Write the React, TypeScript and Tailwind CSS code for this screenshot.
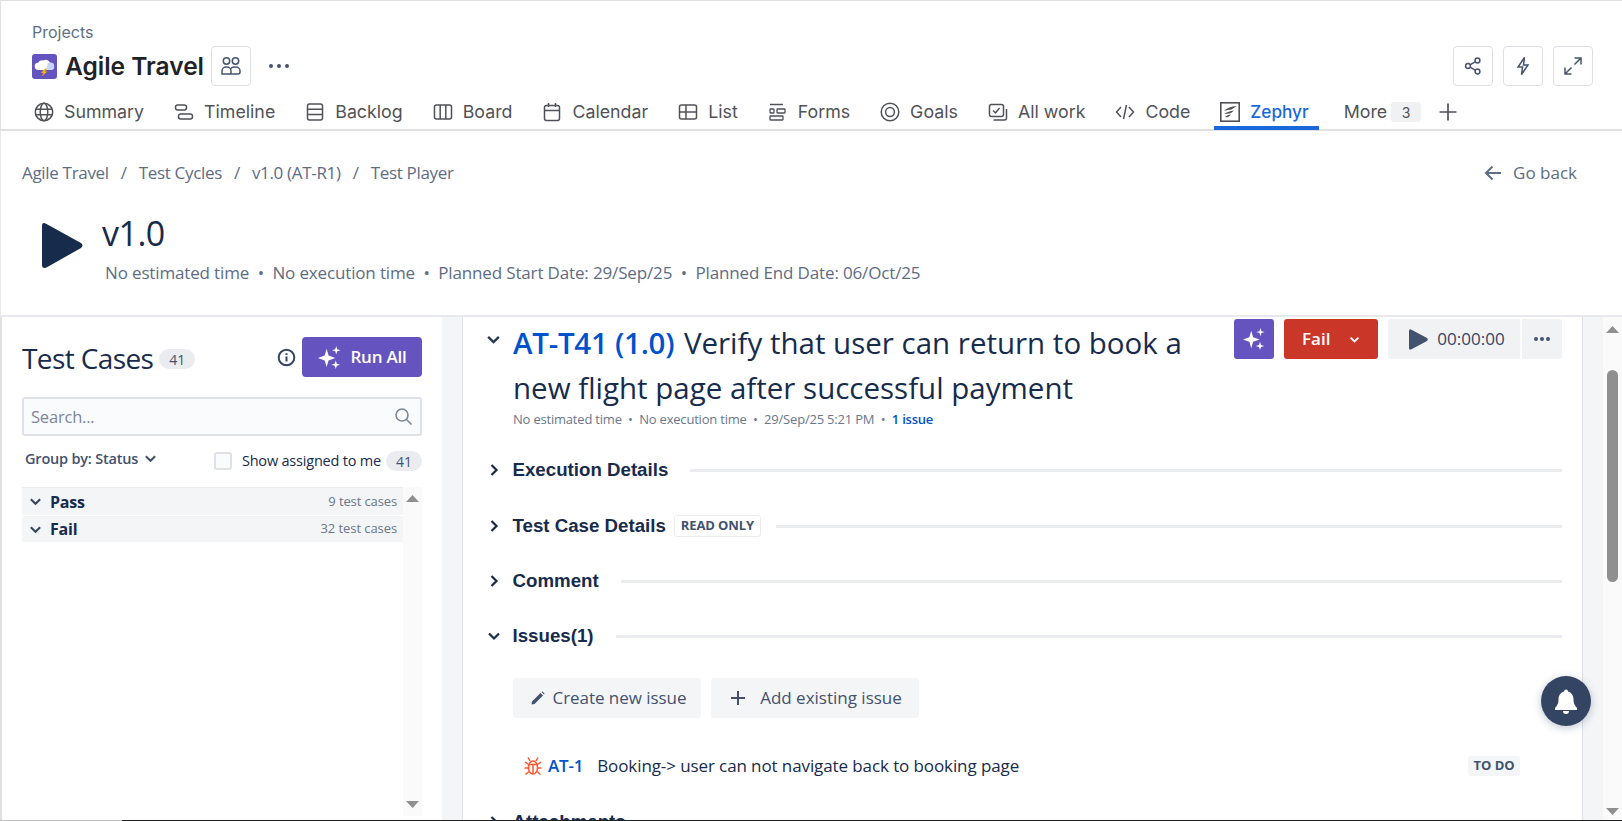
import React from "react";

const S = ({ children, w = 20, vb = "0 0 20 20", c = "" }: { children: React.ReactNode; w?: number; vb?: string; c?: string }) => (
  <svg width={w} height={w} viewBox={vb} fill="none" stroke="currentColor" strokeWidth="1.5" className={`shrink-0 ${c}`}>
    {children}
  </svg>
);

const Sparkles = ({ w = 26 }: { w?: number }) => (
  <svg width={w} height={w} viewBox="0 0 26 26" fill="white" className="shrink-0">
    <path d="M10 4 L12 11 L19 13.5 L12 16 L10 23 L8 16 L1 13.5 L8 11 Z" />
    <path d="M20 1 L21 4.5 L24.5 5.5 L21 6.5 L20 10 L19 6.5 L15.5 5.5 L19 4.5 Z" />
    <path d="M19.5 16 L20.6 19.4 L24 20.5 L20.6 21.6 L19.5 25 L18.4 21.6 L15 20.5 L18.4 19.4 Z" />
  </svg>
);

const Chevron = ({ dir = "down", c = "text-[#172b4d]", w = 14 }: { dir?: "down" | "right"; c?: string; w?: number }) => (
  <svg width={w} height={w} viewBox="0 0 14 14" fill="none" stroke="currentColor" strokeWidth="2.2" className={`shrink-0 ${c}`}>
    {dir === "down" ? <path d="M2 4.5 L7 9.5 L12 4.5" /> : <path d="M4.5 2 L9.5 7 L4.5 12" />}
  </svg>
);

const nav: { label: string; icon: React.ReactNode }[] = [
  { label: "Summary", icon: <S><circle cx="10" cy="10" r="8.7" /><ellipse cx="10" cy="10" rx="3.8" ry="8.7" /><path d="M1.5 7.3h17M1.5 12.7h17" /></S> },
  { label: "Timeline", icon: <S><rect x="1.5" y="3" width="11" height="5" rx="2.2" /><rect x="4.5" y="12" width="14" height="5" rx="2.2" /></S> },
  { label: "Backlog", icon: <S><rect x="2.5" y="2" width="15" height="16" rx="2" /><path d="M2.5 7.3h15M2.5 12.6h15" /></S> },
  { label: "Board", icon: <S><rect x="1.5" y="3" width="17" height="14" rx="2" /><path d="M7.2 3v14M12.8 3v14" /></S> },
  { label: "Calendar", icon: <S><rect x="2.5" y="3.5" width="15" height="15" rx="2" /><path d="M2.5 8.5h15M6.5 1v4M13.5 1v4" /></S> },
  { label: "List", icon: <S><rect x="1.5" y="3" width="17" height="14" rx="2" /><path d="M1.5 10h17M8 3v14" /></S> },
  { label: "Forms", icon: <S><path d="M2 2.5h13" /><rect x="2" y="7" width="4" height="4" rx="0.5" strokeWidth="1.3" /><rect x="9" y="7" width="8" height="4" rx="0.5" strokeWidth="1.3" /><rect x="2" y="14" width="13" height="4" rx="0.5" strokeWidth="1.3" /></S> },
  { label: "Goals", icon: <S><circle cx="10" cy="10" r="8.8" /><circle cx="10" cy="10" r="4.4" /></S> },
  { label: "All work", icon: <S><rect x="1.5" y="2.5" width="14" height="12" rx="2" /><path d="M5 8.5 L7.5 11 L11.5 6" /><path d="M18.5 7v9a2 2 0 0 1-2 2h-11" /></S> },
  { label: "Code", icon: <S><path d="M6 5 L1.5 10 L6 15M14 5 L18.5 10 L14 15M11.5 3 L8.5 17" /></S> },
];

const Section = ({ title, open = false, badge, mt }: { title: string; open?: boolean; badge?: boolean; mt: string }) => (
  <div className={`flex items-center h-[24px] ${mt}`}>
    <div className="w-[26.5px] pl-[1px] shrink-0"><Chevron dir={open ? "down" : "right"} w={14} /></div>
    <span className="font-['Liberation_Sans'] font-bold text-[18.7px] text-[#172b4d] whitespace-nowrap">{title}</span>
    {badge && (
      <span className="ml-[8px] h-[22px] w-[87px] flex items-center justify-center rounded-[3px] border border-[#ebecf0] text-[13px] font-bold text-[#42526e] font-['Open_Sans'] tracking-[-0.1px]">READ ONLY</span>
    )}
    <div className={`flex-1 h-[3px] bg-[#ebecf0] ${badge ? "ml-[15px]" : "ml-[22px]"}`} />
  </div>
);

export default function App() {
  return (
    <div className="relative w-[1622px] h-[821px] overflow-hidden bg-white font-['Open_Sans'] text-[#172b4d]">
      <div className="h-[131px] border-t border-l border-b-2 border-[#e0e0e0] font-['Inter'] flex flex-col">
        <div className="pl-[31px] pt-[21px] h-[45px] text-[16px] leading-[20px] text-[#626f86]">Projects</div>
        <div className="flex items-center h-[40px] pl-[31px] pr-[29px]">
          <svg width="25" height="25" viewBox="0 0 25 25" className="shrink-0">
            <rect width="25" height="25" rx="3" fill="#6554c0" />
            <path d="M6.5 16a3.6 3.6 0 0 1-.4-7.2 4.2 4.2 0 0 1 5-2.4 4.8 4.8 0 0 1 7 2.600 3.500 3.500 0 0 1 .8 7Z" fill="#ffffff" />
            <path d="M16 9a3.800 3.800 0 0 1 2.100-.4 3.500 3.500 0 0 1 .8 7.400H14Z" fill="#c9d4fb" />
            <path d="M13 14.500 L9 19 H11.500 L9.500 22.500 L15.500 17.500 H13 L15 14.500Z" fill="#f5b301" />
          </svg>
          <span className="ml-[8px] text-[24.5px] font-semibold text-[#1f2328] whitespace-nowrap">Agile Travel</span>
          <div className="ml-[7px] w-[40px] h-[40px] border border-[#dcdfe4] rounded-[4px] flex items-center justify-center text-[#44546f]">
            <S w={22} vb="0 0 22 22"><circle cx="6.5" cy="6" r="3.2" /><circle cx="15.5" cy="6" r="3.2" /><path d="M2 19v-3a4 4 0 0 1 4-4h1a4 4 0 0 1 4 4v3ZM11 19h7a2 2 0 0 0 2-2v-1a4 4 0 0 0-4-4h-2a4 4 0 0 0-3 1.5" /></S>
          </div>
          <div className="ml-[18px] flex gap-[4px]">
            <i className="w-[4px] h-[4px] rounded-full bg-[#44546f]" /><i className="w-[4px] h-[4px] rounded-full bg-[#44546f]" /><i className="w-[4px] h-[4px] rounded-full bg-[#44546f]" />
          </div>
          <div className="ml-auto flex gap-[10px] text-[#44546f]">
            <div className="w-[40px] h-[40px] border border-[#dcdfe4] rounded-[4px] flex items-center justify-center">
              <S w={18} vb="0 0 18 18"><circle cx="4" cy="9" r="2.4" /><circle cx="13.5" cy="3.5" r="2.4" /><circle cx="13.5" cy="14.5" r="2.4" /><path d="M6 7.8 L11.5 4.7M6 10.2 L11.5 13.3" /></S>
            </div>
            <div className="w-[40px] h-[40px] border border-[#dcdfe4] rounded-[4px] flex items-center justify-center">
              <S w={20} vb="0 0 20 20"><path d="M11.5 1.5 L5 11 H9.5 L8.5 18.5 L15 9 H10.5Z" /></S>
            </div>
            <div className="w-[40px] h-[40px] border border-[#dcdfe4] rounded-[4px] flex items-center justify-center">
              <S w={20} vb="0 0 20 20"><path d="M11.5 2h6.5v6.5M18 2 L11.5 8.5M8.5 18H2v-6.5M2 18 L8.5 11.5" /></S>
            </div>
          </div>
        </div>
        <div className="flex items-center h-[42px] pt-[10px] pl-[33px] gap-[30px] text-[#505258] text-[17.8px] whitespace-nowrap">
          {nav.map((n) => (
            <div key={n.label} className="flex items-center gap-[10px]">
              {n.icon}
              <span>{n.label}</span>
            </div>
          ))}
          <div className="relative flex items-center gap-[10px] h-[32px] text-[#1868db] text-[17.2px] font-medium -ml-[6px] -mr-[10px] pl-[6px] pr-[10px]">
            <span className="text-[#505258]">
              <svg width="20" height="20" viewBox="0 0 20 20" fill="none" className="shrink-0">
                <rect x="0.8" y="0.8" width="18.4" height="18.400" stroke="currentColor" strokeWidth="1.6" />
                <path d="M4 9 C7 6 11 4.500 16.500 4 C14.500 5.500 13 6.500 11.500 7.500 C9 7.800 6.500 8.300 4 9Z" fill="currentColor" />
                <path d="M4 12 C7 10 10 9 14 8.500 C12.500 10 11 11 9.500 11.500 C7.500 11.500 5.500 11.700 4 12Z" fill="currentColor" />
                <path d="M5 15 C6.500 13.500 8.500 12.800 11 12.500 C9.800 14 8.500 15 7 15.200 C6.300 15.200 5.600 15.100 5 15Z" fill="currentColor" />
              </svg>
            </span>
            <span>Zephyr</span>
            <div className="absolute left-0 right-0 -bottom-[2px] h-[4px] bg-[#1868db]" />
          </div>
          <div className="flex items-center ml-[5px]">
            <span>More</span>
            <span className="ml-[4px] w-[30px] h-[20px] rounded-[3px] bg-[#f0f1f2] text-[14px] flex items-center justify-center">3</span>
            <svg width="18" height="18" viewBox="0 0 18 18" stroke="currentColor" strokeWidth="1.7" className="ml-[18px]"><path d="M9 0.5v17M0.5 9h17" /></svg>
          </div>
        </div>
      </div>

      <div className="h-[186px] border-l border-b-2 border-[#e8e9ec] flex flex-col">
        <div className="mt-[31px] pl-[21px] pr-[45px] flex items-center justify-between h-[22px] text-[#5e6c84] text-[17px]">
          <div className="flex gap-[12px] whitespace-nowrap tracking-[-0.32px]">
            <span>Agile Travel</span><span>/</span><span>Test Cycles</span><span>/</span><span>v1.0 (AT-R1)</span><span>/</span><span>Test Player</span>
          </div>
          <div className="flex items-center gap-[10px] whitespace-nowrap font-medium">
            <svg width="20" height="20" viewBox="0 0 20 20" fill="none" stroke="currentColor" strokeWidth="2"><path d="M18 10H3M9.5 3.5 L3 10 L9.5 16.5" /></svg>
            <span>Go back</span>
          </div>
        </div>
        <div className="flex pl-[41px] mt-[27px]">
          <svg width="41" height="47" viewBox="0 0 41 47" className="shrink-0 mt-[11px]">
            <path d="M0 4 Q0 -1 4.5 2 L39 21 Q42 23.5 39 26 L4.5 45.5 Q0 47 0 43 Z" fill="#172b4d" />
          </svg>
          <div className="ml-[19px]">
            <div className="text-[34px] leading-[44px] text-[#172b4d] tracking-[-0.5px]">v1.0</div>
            <div className="mt-[7px] ml-[3px] text-[17px] leading-[22px] text-[#5e6c84] whitespace-nowrap tracking-[-0.15px]">No estimated time&nbsp; •&nbsp; No execution time&nbsp; •&nbsp; Planned Start Date: 29/Sep/25&nbsp; •&nbsp; Planned End Date: 06/Oct/25</div>
          </div>
        </div>
      </div>

      <div className="flex h-[504px]">
        <div className="w-[442px] shrink-0 border-l-2 border-[#e0e0e0] pl-[20px] pr-[20px] pt-[20px] flex flex-col">
          <div className="flex items-center h-[40px]">
            <span className="text-[28px] tracking-[-0.6px] whitespace-nowrap pt-[2px]">Test Cases</span>
            <span className="ml-[6px] mt-[4px] w-[36px] h-[20px] rounded-full bg-[#ebecf0] text-[14px] text-[#42526e] flex items-center justify-center">41</span>
            <svg width="19" height="19" viewBox="0 0 19 19" fill="none" className="ml-auto text-[#344563]" stroke="currentColor" strokeWidth="2"><circle cx="9.5" cy="9.5" r="7.8" /><path d="M9.5 8.5v5M9.5 5.2v1.8" /></svg>
            <button className="ml-[6px] w-[120px] h-[40px] rounded-[4px] bg-[#6554c0] text-white text-[17px] font-semibold flex items-center justify-center gap-[8px] tracking-[-0.2px]">
              <Sparkles w={25} /> Run All
            </button>
          </div>
          <div className="mt-[20px] h-[39px] border-2 border-[#dfe1e6] rounded-[3px] bg-[#fafbfc] flex items-center pl-[7px] pr-[7px] justify-between">
            <span className="text-[#7a869a] text-[16.5px] tracking-[-0.2px] pt-[2px]">Search...</span>
            <svg width="19" height="19" viewBox="0 0 19 19" fill="none" stroke="#7a869a" strokeWidth="1.6"><circle cx="8" cy="8" r="6" /><path d="M12.5 12.5 L17.5 17.5" /></svg>
          </div>
          <div className="flex items-center mt-[12px] h-[26px]">
            <div className="flex items-center gap-[6px] pl-[3px] -mt-[5px] text-[14.5px] font-semibold text-[#42526e] tracking-[-0.2px] whitespace-nowrap">
              Group by: Status <Chevron c="text-[#42526e]" w={13} />
            </div>
            <div className="ml-auto flex items-center">
              <span className="w-[18px] h-[18px] rounded-[3px] border-2 border-[#dfe1e6] bg-[#fafbfc]" />
              <span className="ml-[10px] text-[14.5px] tracking-[-0.2px] whitespace-nowrap">Show assigned to me</span>
              <span className="ml-[5px] w-[36px] h-[20px] rounded-full bg-[#ebecf0] text-[14px] text-[#42526e] flex items-center justify-center">41</span>
            </div>
          </div>
          <div className="mt-[13px] flex flex-1 min-h-0">
            <div className="flex-1">
              <div className="h-[28px] border-t border-[#ebecf0] bg-[#f4f5f7] flex items-center pl-[7px] pr-[6px] mb-[1px]">
                <Chevron w={13} c="text-[#344563]" />
                <span className="ml-[8px] text-[16px] font-bold tracking-[-0.2px]">Pass</span>
                <span className="ml-auto text-[13px] text-[#6b778c] tracking-[-0.12px]">9 test cases</span>
              </div>
              <div className="h-[26px] bg-[#f4f5f7] flex items-center pl-[7px] pr-[6px]">
                <Chevron w={13} c="text-[#344563]" />
                <span className="ml-[8px] text-[16px] font-bold tracking-[-0.2px]">Fail</span>
                <span className="ml-auto text-[13px] text-[#6b778c] tracking-[-0.08px]">32 test cases</span>
              </div>
            </div>
            <div className="w-[19px] mb-[5px] bg-[#fafafa] flex flex-col items-center justify-between pt-[8px] pb-[8px]">
              <svg width="13" height="7" viewBox="0 0 13 7" fill="#8f8f8f"><path d="M6.5 0 L13 7 H0Z" /></svg>
              <svg width="13" height="7" viewBox="0 0 13 7" fill="#8f8f8f"><path d="M0 0 H13 L6.5 7Z" /></svg>
            </div>
          </div>
        </div>
        <div className="w-[21px] shrink-0 bg-[#f4f5f7] border-r border-[#dfe1e6]" />
        <div className="flex-1 min-w-0 overflow-hidden pl-[23px] pr-[20px] pt-[2px]">
          <div className="flex h-[110px] items-start">
            <div className="w-[27px] pt-[13px] shrink-0"><Chevron w={15} c="text-[#253858]" /></div>
            <div className="w-[700px] shrink-0 pt-[1px]">
              <div className="text-[29.5px] leading-[45px]">
                <span className="text-[#0052cc] font-semibold tracking-[-0.25px] mr-[2px]">AT-T41 (1.0)</span> Verify that user can return to book a new flight page after successful payment
              </div>
              <div className="text-[13px] leading-[16px] text-[#6b778c] whitespace-nowrap mt-[1px] tracking-[-0.2px]">
                No estimated time&nbsp; •&nbsp; No execution time&nbsp; •&nbsp; 29/Sep/25 5:21 PM&nbsp; •&nbsp; <span className="text-[#0052cc] font-semibold">1 issue</span>
              </div>
            </div>
            <div className="ml-auto flex">
              <div className="w-[40px] h-[40px] rounded-[3px] bg-[#6554c0] flex items-center justify-center"><Sparkles w={24} /></div>
              <div className="ml-[10px] w-[94px] h-[40px] rounded-[3px] bg-[#ca3728] text-white flex items-center pl-[18px] pr-[18px] justify-between text-[17px] font-semibold">
                Fail <Chevron c="text-white" w={11} />
              </div>
              <div className="ml-[10px] w-[132px] h-[40px] rounded-l-[3px] bg-[#f1f2f4] flex items-center justify-center gap-[9px] pl-[6px] text-[#344563]">
                <svg width="19" height="21" viewBox="0 0 19 21" fill="#42526e"><path d="M0 2 Q0 -0.5 2.5 0.8 L18 9 Q19.5 10.5 18 12 L2.5 20.2 Q0 21.5 0 19 Z" /></svg>
                <span className="text-[17px]">00:00:00</span>
              </div>
              <div className="ml-[2px] w-[40px] h-[40px] rounded-r-[3px] bg-[#f1f2f4] flex items-center justify-center gap-[2px]">
                <i className="w-[4px] h-[4px] rounded-full bg-[#42526e]" /><i className="w-[4px] h-[4px] rounded-full bg-[#42526e]" /><i className="w-[4px] h-[4px] rounded-full bg-[#42526e]" />
              </div>
            </div>
          </div>
          <Section title="Execution Details" mt="mt-[29px]" />
          <Section title="Test Case Details" badge mt="mt-[32px]" />
          <Section title="Comment" mt="mt-[31px]" />
          <Section title="Issues(1)" open mt="mt-[31px]" />
          <div className="flex gap-[10px] ml-[27px] mt-[30px] text-[#42526e] text-[17px] font-medium">
            <div className="h-[40px] w-[188px] rounded-[3px] bg-[#f4f5f7] flex items-center justify-center gap-[8px] pl-[3px] whitespace-nowrap tracking-[-0.05px]">
              <svg width="14" height="14" viewBox="0 0 14 14" fill="#42526e"><path d="M1 10.5 L9.5 2 L12 4.5 L3.5 13 L0.5 13.5Z M10.5 1 L11.5 0.5 L13.5 2.5 L13 3.5Z" /></svg>
              Create new issue
            </div>
            <div className="h-[40px] w-[208px] rounded-[3px] bg-[#f4f5f7] flex items-center justify-center gap-[14px] pl-[2px] whitespace-nowrap">
              <svg width="16" height="16" viewBox="0 0 16 16" stroke="#42526e" strokeWidth="2"><path d="M8 1v14M1 8h14" /></svg>
              Add existing issue
            </div>
          </div>
          <div className="flex items-center ml-[37px] mt-[36px] h-[24px] pr-[42px]">
            <svg width="20" height="20" viewBox="0 0 20 20" fill="none" stroke="#ff5630" strokeWidth="1.5" className="shrink-0">
              <ellipse cx="10" cy="11.5" rx="4.5" ry="6.5" /><path d="M5.5 8.5h9M10 8.5v9M7 5 L5 1.5M13 5 L15 1.5M5.5 8.5 L2 6M14.5 8.5 L18 6M5.5 12h-4M14.5 12h4M6 15.5 L2.5 18.5M14 15.5 L17.5 18.5" />
            </svg>
            <span className="ml-[5px] text-[#0052cc] text-[17px] font-semibold tracking-[-0.2px]">AT-1</span>
            <span className="ml-[14px] text-[17px] whitespace-nowrap tracking-[-0.1px]">Booking-&gt; user can not navigate back to booking page</span>
            <span className="ml-auto w-[52px] h-[20px] rounded-[3px] bg-[#f4f5f7] flex items-center justify-center text-[#42526e] text-[13px] font-bold">TO DO</span>
          </div>
          <div className="flex items-center mt-[32px] h-[24px]">
            <div className="w-[26.5px] pl-[1px]"><Chevron dir="right" /></div>
            <span className="font-['Liberation_Sans'] font-bold text-[18.7px]">Attachments</span>
          </div>
        </div>
        <div className="w-[21px] shrink-0 bg-[#f4f5f7] border-l border-[#dfe1e6]" />
        <div className="w-[19px] shrink-0 bg-[#fafafa] flex flex-col items-center justify-between pt-[9px] pb-[6px]">
          <svg width="13" height="7" viewBox="0 0 13 7" fill="#8f8f8f"><path d="M6.5 0 L13 7 H0Z" /></svg>
          <div className="w-[11px] h-[212px] rounded-full bg-[#8f8f8f] mb-auto mt-[37px]" />
          <svg width="13" height="7" viewBox="0 0 13 7" fill="#8f8f8f"><path d="M0 0 H13 L6.5 7Z" /></svg>
        </div>
      </div>

      <div className="absolute left-[1541px] top-[676px] w-[50px] h-[50px] rounded-full bg-[#344563] shadow-[0_2px_8px_rgba(9,30,66,0.25)] flex items-center justify-center">
        <svg width="24" height="27" viewBox="0 0 24 27" fill="white"><path d="M12 1.5a2 2 0 0 1 2 2c3.5 1 5.5 4 5.5 8 0 4 1.2 6 3.5 8.5V22H1v-2c2.3-2.5 3.5-4.5 3.5-8.5s2-7 5.5-8a2 2 0 0 1 2-2Z" /><path d="M9 23h6a3 3 0 0 1-6 0Z" /></svg>
      </div>
      <div className="absolute left-0 bottom-0 h-[1px] w-[122px] bg-[#c0c0c0]" />
      <div className="absolute left-[122px] right-0 bottom-0 h-[1px] bg-[#202020]" />
    </div>
  );
}
